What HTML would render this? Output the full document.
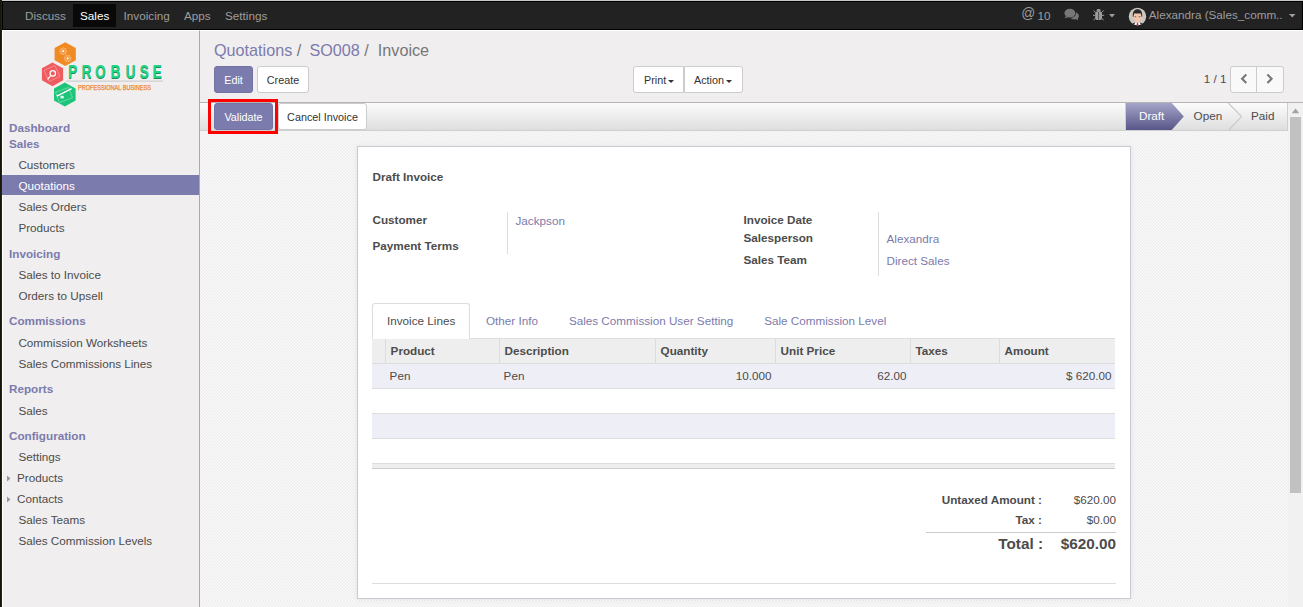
<!DOCTYPE html>
<html><head><meta charset="utf-8">
<style>
*{box-sizing:border-box}
html,body{margin:0;padding:0}
body{width:1303px;height:607px;overflow:hidden;position:relative;background:#f4f4f4;font-family:"Liberation Sans",sans-serif;font-size:11.7px;color:#4c4c4c}
.a{position:absolute}
.t{position:absolute;white-space:nowrap;font-size:11.7px;line-height:14px}
.b{font-weight:bold}
.p{color:#7c7bad}
#fl0{left:0;top:0;width:1px;height:607px;background:#16160a}
#fl1{left:1px;top:0;width:1px;height:607px;background:#222}
#ft0{left:2px;top:0;width:1301px;height:1px;background:#c8c8c8}
#nav{left:2px;top:1px;width:1301px;height:29px;background:#222;border:1px solid #000}
.nv{color:#9d9d9d}
#side{left:2px;top:30px;width:198px;height:577px;background:#f0eeee;border-left:1px solid #fff;border-top:1px solid #fff;border-right:1px solid #a9a9b2}
#cp{left:200px;top:30px;width:1103px;height:73px;background:#f0eeee;border-top:1px solid #fff;border-bottom:1px solid #b5b5b5}
#content{left:200px;top:103px;width:1103px;height:504px}
.btn{position:absolute;border:1px solid #ccc;border-radius:3px;background:#fff;color:#333;text-align:center;white-space:nowrap;font-size:10.8px}
.caret{display:inline-block;width:0;height:0;border-top:3.5px solid #333;border-left:3px solid transparent;border-right:3px solid transparent;vertical-align:middle;margin-left:-1px}
.bp{background:#7c7bad;border-color:#7372a6;color:#fff}
</style></head><body>
<div class="a" id="fl0"></div><div class="a" id="fl1"></div><div class="a" id="ft0"></div>
<div class="a" id="nav">
  <div class="a" style="left:70px;top:2px;width:43px;height:23px;background:#090909"></div>
</div>
<div class="t nv" style="left:25px;top:9px">Discuss</div>
<div class="t" style="left:80px;top:9px;color:#fff">Sales</div>
<div class="t nv" style="left:123.6px;top:9px">Invoicing</div>
<div class="t nv" style="left:184px;top:9px">Apps</div>
<div class="t nv" style="left:225px;top:9px">Settings</div>

<div class="t nv" style="left:1021.3px;top:4px;font-size:13.8px;line-height:19px">@</div>
<div class="t nv" style="left:1037.4px;top:9px">10</div>
<div class="t nv" style="left:1148.8px;top:8px">Alexandra (Sales_comm..</div>

<div class="a" id="side"></div>
<div class="a" id="cp"></div>
<svg class="a" id="content" width="1103" height="504" shape-rendering="crispEdges"><defs><pattern id="bgp" x="0" y="0" width="3" height="3" patternUnits="userSpaceOnUse"><rect width="3" height="3" fill="#f6f6f6"/><rect x="1" y="2" width="1" height="1" fill="#fdfdfd"/><rect x="0" y="2" width="1" height="1" fill="#efefef"/><rect x="2" y="2" width="1" height="1" fill="#efefef"/><rect x="1" y="0" width="1" height="2" fill="#efefef"/></pattern></defs><rect width="1103" height="504" fill="url(#bgp)"/></svg>

<!-- breadcrumb -->
<div class="t p" style="left:214px;top:41px;font-size:16.2px;line-height:19px">Quotations <span style="color:#777">/</span>&nbsp; <span style="margin-left:-0.9px">SO008</span> <span style="color:#777">/</span>&nbsp; <span style="color:#777">Invoice</span></div>

<div class="btn bp" style="left:214px;top:66px;width:39px;height:27px;line-height:27px">Edit</div>
<div class="btn" style="left:257px;top:66px;width:52px;height:27px;line-height:27px">Create</div>

<!-- sidebar -->
<div class="t b p" style="left:9px;top:121px">Dashboard</div>
<div class="t b p" style="left:9px;top:137px">Sales</div>
<div class="t" style="left:18.4px;top:158px">Customers</div>
<div class="a" style="left:2px;top:175px;width:197px;height:20px;background:#7c7bad"></div>
<div class="t" style="left:18.4px;top:179px;color:#fff">Quotations</div>
<div class="t" style="left:18.4px;top:200px">Sales Orders</div>
<div class="t" style="left:18.4px;top:221px">Products</div>
<div class="t b p" style="left:9px;top:247px">Invoicing</div>
<div class="t" style="left:18.4px;top:268px">Sales to Invoice</div>
<div class="t" style="left:18.4px;top:289px">Orders to Upsell</div>
<div class="t b p" style="left:9px;top:314px">Commissions</div>
<div class="t" style="left:18.4px;top:336px">Commission Worksheets</div>
<div class="t" style="left:18.4px;top:357px">Sales Commissions Lines</div>
<div class="t b p" style="left:9px;top:382px">Reports</div>
<div class="t" style="left:18.4px;top:404px">Sales</div>
<div class="t b p" style="left:9px;top:429px">Configuration</div>
<div class="t" style="left:18.4px;top:450px">Settings</div>
<div class="t" style="left:17px;top:471px">Products</div>
<div class="t" style="left:17px;top:492px">Contacts</div>
<div class="t" style="left:18.4px;top:513px">Sales Teams</div>
<div class="t" style="left:18.4px;top:534px">Sales Commission Levels</div>


<!-- control panel right -->
<div class="btn" style="left:633px;top:66px;width:51px;height:27px;line-height:26px;border-radius:3px 0 0 3px;text-align:left;padding-left:10px">Print <span class="caret"></span></div>
<div class="btn" style="left:684px;top:66px;width:59px;height:27px;line-height:26px;border-radius:0 3px 3px 0;text-align:left;padding-left:9px">Action <span class="caret"></span></div>
<div class="t" style="left:1203.7px;top:72px;color:#4c4c4c">1 / 1</div>
<div class="btn" style="left:1230px;top:66px;width:27px;height:27px;border-radius:3px 0 0 3px;background:#f9f9f9"></div>
<div class="btn" style="left:1256px;top:66px;width:27.5px;height:27px;border-radius:0 3px 3px 0;background:#f9f9f9"></div>

<!-- statusbar -->
<div class="a" id="sbar" style="left:200px;top:103px;width:1088px;height:28px;background:linear-gradient(#fcfcfc,#dedede);border-bottom:1px solid #cfcfcf;border-right:1px solid #cfcfcf"></div>
<div class="a" style="left:208px;top:99px;width:70px;height:35px;border:3px solid #f00"></div>
<div class="btn bp" style="left:214px;top:103px;width:59px;height:27px;line-height:26px">Validate</div>
<div class="btn" style="left:278px;top:103px;width:89px;height:27px;line-height:26px">Cancel Invoice</div>

<!-- scrollbar -->
<div class="a" style="left:1288px;top:103px;width:15px;height:504px;background:#f1f1f1"></div>
<div class="a" style="left:1290px;top:117px;width:11px;height:376px;background:#c1c1c1"></div>

<!-- sheet -->
<div class="a" id="sheet" style="left:357px;top:146px;width:774px;height:453px;background:#fff;border:1px solid #c9c9d4;box-shadow:0 0 6px rgba(0,0,0,.07)"></div>
<div class="t b" style="left:372.5px;top:170px">Draft Invoice</div>
<div class="t b" style="left:372.5px;top:213px">Customer</div>
<div class="t b" style="left:372.5px;top:239px">Payment Terms</div>
<div class="a" style="left:507px;top:212px;width:1px;height:42px;background:#ddd"></div>
<div class="t p" style="left:515.5px;top:214px">Jackpson</div>
<div class="t b" style="left:743.5px;top:213px">Invoice Date</div>
<div class="t b" style="left:743.5px;top:231px">Salesperson</div>
<div class="t b" style="left:743.5px;top:253px">Sales Team</div>
<div class="a" style="left:878px;top:212px;width:1px;height:64px;background:#ddd"></div>
<div class="t p" style="left:886.5px;top:232px">Alexandra</div>
<div class="t p" style="left:886.5px;top:254px">Direct Sales</div>

<!-- tabs -->
<div class="a" style="left:372px;top:338px;width:743px;height:1px;background:#ddd"></div>
<div class="a" style="left:372px;top:303px;width:98px;height:36px;background:#fff;border:1px solid #ddd;border-bottom:none;border-radius:3px 3px 0 0"></div>
<div class="t" style="left:387px;top:314px">Invoice Lines</div>
<div class="t p" style="left:486px;top:314px">Other Info</div>
<div class="t p" style="left:568.9px;top:314px">Sales Commission User Setting</div>
<div class="t p" style="left:764.2px;top:314px">Sale Commission Level</div>

<!-- table -->
<div class="a" style="left:372px;top:339px;width:743px;height:25px;background:#eee;border-bottom:1px solid #ddd"></div>
<div class="a" style="left:385px;top:339px;width:1px;height:24px;background:#ddd"></div>
<div class="a" style="left:499px;top:339px;width:1px;height:24px;background:#ddd"></div>
<div class="a" style="left:655px;top:339px;width:1px;height:24px;background:#ddd"></div>
<div class="a" style="left:775px;top:339px;width:1px;height:24px;background:#ddd"></div>
<div class="a" style="left:910px;top:339px;width:1px;height:24px;background:#ddd"></div>
<div class="a" style="left:999px;top:339px;width:1px;height:24px;background:#ddd"></div>
<div class="t b" style="left:390.6px;top:344px">Product</div>
<div class="t b" style="left:504.6px;top:344px">Description</div>
<div class="t b" style="left:660.6px;top:344px">Quantity</div>
<div class="t b" style="left:780.6px;top:344px">Unit Price</div>
<div class="t b" style="left:915.6px;top:344px">Taxes</div>
<div class="t b" style="left:1004.6px;top:344px">Amount</div>

<div class="a" style="left:372px;top:364px;width:743px;height:25px;background:#eeeef6;border-bottom:1px solid #ddd"></div>
<div class="t" style="left:389.6px;top:369px">Pen</div>
<div class="t" style="left:503.6px;top:369px">Pen</div>
<div class="t" style="left:600px;top:369px;width:171.4px;text-align:right">10.000</div>
<div class="t" style="left:740px;top:369px;width:166.4px;text-align:right">62.00</div>
<div class="t" style="left:940px;top:369px;width:171.4px;text-align:right">$ 620.00</div>

<div class="a" style="left:372px;top:389px;width:743px;height:25px;background:#fff;border-bottom:1px solid #ddd"></div>
<div class="a" style="left:372px;top:414px;width:743px;height:25px;background:#eeeef6;border-bottom:1px solid #ddd"></div>
<div class="a" style="left:372px;top:439px;width:743px;height:24px;background:#fff"></div>
<div class="a" style="left:372px;top:463px;width:743px;height:6px;background:#eee;border-top:1px solid #ddd;border-bottom:1px solid #ccc"></div>

<!-- totals -->
<div class="t b" style="left:900px;top:493px;width:142px;text-align:right">Untaxed Amount :</div>
<div class="t" style="left:1000px;top:493px;width:116px;text-align:right">$620.00</div>
<div class="t b" style="left:900px;top:513px;width:142px;text-align:right">Tax :</div>
<div class="t" style="left:1000px;top:513px;width:116px;text-align:right">$0.00</div>
<div class="a" style="left:926px;top:532px;width:190px;height:1px;background:#ccc"></div>
<div class="t b" style="left:900px;top:535px;width:143px;text-align:right;font-size:15.3px;line-height:18px">Total :</div>
<div class="t b" style="left:1000px;top:535px;width:116px;text-align:right;font-size:15.3px;line-height:18px">$620.00</div>
<div class="a" style="left:372px;top:583px;width:744px;height:1px;background:#ddd"></div>


<!-- navbar icons -->
<svg class="a" style="left:1060px;top:4px" width="60" height="22" viewBox="0 0 60 22">
  <g fill="#777">
    <ellipse cx="14.3" cy="11.9" rx="4.6" ry="3.7"/>
    <path d="M15.5 14.5l2.6 1.9-.4-2.6z"/>
  </g>
  <ellipse cx="9.9" cy="9.2" rx="6.1" ry="4.9" fill="#222"/>
  <g fill="#777">
    <ellipse cx="9.9" cy="9.1" rx="5.5" ry="4.3"/>
    <path d="M6 12l-1.5 2.3 3.6-1.1z"/>
  </g>
  <g fill="#9d9d9d">
    <ellipse cx="38.6" cy="6.3" rx="2.1" ry="1.4"/>
    <rect x="35.2" y="7.2" width="6.8" height="8.9" rx="2.6"/>
    <path d="M33.6 6.6l2.2 2M43.6 6.6l-2.2 2M33 11.3h2.4M44.2 11.3h-2.4M33.6 16l2.2-1.8M43.6 16l-2.2-1.8" stroke="#9d9d9d" stroke-width="1"/>
    <path d="M49 10h6l-3 3.5z"/>
  </g>
  <rect x="38.1" y="8" width="1" height="7.6" fill="#4a4a4a"/>
</svg>
<svg class="a" style="left:1128px;top:7px" width="19" height="19" viewBox="0 0 19 19">
  <defs><clipPath id="cc"><circle cx="9.5" cy="9.5" r="8.7"/></clipPath></defs>
  <circle cx="9.5" cy="9.5" r="8.7" fill="#cbc6bf"/>
  <g clip-path="url(#cc)">
    <path d="M2.5 19.5c.6-3 3-4.3 7-4.3s6.4 1.3 7 4.3z" fill="#3a3a3a"/>
    <path d="M6 19.5l1.2-4.2h4.6l1.2 4.2z" fill="#fff"/>
    <path d="M9 15.4h1l.5 3.2-1 .8-1-.8z" fill="#d8202c"/>
    <path d="M5.2 6.5C5.2 12.5 7.2 15.4 9.5 15.4S13.8 12.5 13.8 6.5z" fill="#f2c6ac"/>
    <path d="M4.8 9.8C4.4 4.6 6.4 2.3 9.5 2.3s5.1 2.3 4.7 7.5h-.7c-.2-2-.6-3.2-1.1-3.6-1.8.4-4 .4-5.8 0-.5.4-.9 1.6-1.1 3.6z" fill="#2b2b2b"/>
    <rect x="6.6" y="9.4" width="1.7" height=".8" fill="#5d4a40"/><rect x="10.7" y="9.4" width="1.7" height=".8" fill="#5d4a40"/>
  </g>
</svg>
<svg class="a" style="left:1286px;top:10px" width="12" height="10"><path d="M3 4h6.5l-3.25 3.5z" fill="#9d9d9d"/></svg>

<!-- pager chevrons -->
<svg class="a" style="left:1230px;top:66px" width="54" height="27" viewBox="0 0 54 27">
  <path d="M16.3 8.6L12.1 12.8 16.3 17" fill="none" stroke="#777" stroke-width="2.1"/>
  <path d="M37.4 8.6L41.6 12.8 37.4 17" fill="none" stroke="#777" stroke-width="2.1"/>
</svg>

<!-- statusbar right -->
<svg class="a" style="left:1125px;top:103px" width="163" height="28" viewBox="0 0 163 28">
  <defs><linearGradient id="pg" x1="0" y1="0" x2="0" y2="1"><stop offset="0" stop-color="#a5a4c9"/><stop offset="1" stop-color="#575688"/></linearGradient></defs>
  <rect x="0" y="0" width="1" height="27" fill="#cfcfcf"/>
  <path d="M1 0h45.7l12.1 13.5-12.1 13.5H1z" fill="url(#pg)"/>
  <path d="M103.3 0l13.2 13.6L103.8 27" fill="none" stroke="#cbcbcb" stroke-width="1.25"/>
</svg>
<div class="t" style="left:1139px;top:109px;color:#fff">Draft</div>
<div class="t" style="left:1193.6px;top:109px;color:#4c4c4c">Open</div>
<div class="t" style="left:1251px;top:109px;color:#4c4c4c">Paid</div>

<!-- scroll arrow -->
<svg class="a" style="left:1288px;top:103px" width="15" height="14"><path d="M3.8 10.2h7.4L7.5 5.6z" fill="#a3a3a3"/></svg>

<!-- sidebar carets -->
<svg class="a" style="left:6px;top:474px" width="6" height="30"><path d="M1 1.5l3.5 3-3.5 3z M1 22.5l3.5 3-3.5 3z" fill="#999"/></svg>

<!-- logo -->
<svg class="a" style="left:36px;top:38px" width="132" height="72" viewBox="36 38 132 72">
  <g>
    <path d="M65.2 42.2l10.6 5.9v12.1l-10.6 5.9-10.6-5.9V48.1z" fill="#f08a22"/>
    <path d="M52.5 62.4l10.6 5.9v12l-10.6 5.9-10.6-5.9v-12z" fill="#ef5b5f"/>
    <path d="M64.8 82.6l10.8 6v12l-10.8 6-10.8-6v-12z" fill="#1ec47a"/>
  </g>
  <g fill="none" stroke="#fcc690" stroke-width="1.1" stroke-dasharray="1 .8">
    <circle cx="63.2" cy="51.2" r="3.2"/><circle cx="67.7" cy="58.4" r="3.2"/>
  </g>
  <g fill="none" stroke="#f9b77a" stroke-width=".7"><circle cx="63.2" cy="51.2" r="2.3"/><circle cx="67.7" cy="58.4" r="2.3"/></g>
  <circle cx="63.2" cy="51.2" r="1.1" fill="#fff"/><circle cx="67.7" cy="58.4" r="1.1" fill="#fff"/>
  <rect x="46" y="67.5" width="12" height="12" transform="rotate(-25 52 73.5)" fill="none" stroke="#f7a3a5" stroke-width=".6"/>
  <g fill="none" stroke="#fff" stroke-width="1.2">
    <circle cx="52.8" cy="73.4" r="2.7"/>
    <path d="M50.9 75.4l-3.3 4"/>
  </g>
  <rect x="57" y="89.5" width="14" height="11" transform="rotate(-20 64 95)" fill="none" stroke="#8ee0b9" stroke-width=".6"/>
  <path d="M56.8 96.2l14.8-7.6" stroke="#fff" stroke-width="1.5"/>
  <rect x="60.5" y="95.8" width="3.2" height="2.6" fill="#fff" opacity=".9"/>
<g transform="translate(68.2 0) scale(.72 1)"><text x="0" y="79.2" font-family="Liberation Sans" font-weight="bold" font-size="18.6" fill="#1b8a58">P</text><text x="0" y="78.3" font-family="Liberation Sans" font-weight="bold" font-size="18.6" fill="#21d482">P</text></g>
<g transform="translate(81.8 0) scale(.72 1)"><text x="0" y="79.2" font-family="Liberation Sans" font-weight="bold" font-size="18.6" fill="#1b8a58">R</text><text x="0" y="78.3" font-family="Liberation Sans" font-weight="bold" font-size="18.6" fill="#21d482">R</text></g>
<g transform="translate(95.3 0) scale(.72 1)"><text x="0" y="79.2" font-family="Liberation Sans" font-weight="bold" font-size="18.6" fill="#1b8a58">O</text><text x="0" y="78.3" font-family="Liberation Sans" font-weight="bold" font-size="18.6" fill="#21d482">O</text></g>
<g transform="translate(110.8 0) scale(.72 1)"><text x="0" y="79.2" font-family="Liberation Sans" font-weight="bold" font-size="18.6" fill="#1b8a58">B</text><text x="0" y="78.3" font-family="Liberation Sans" font-weight="bold" font-size="18.6" fill="#21d482">B</text></g>
<g transform="translate(125.8 0) scale(.72 1)"><text x="0" y="79.2" font-family="Liberation Sans" font-weight="bold" font-size="18.6" fill="#1b8a58">U</text><text x="0" y="78.3" font-family="Liberation Sans" font-weight="bold" font-size="18.6" fill="#21d482">U</text></g>
<g transform="translate(139.8 0) scale(.72 1)"><text x="0" y="79.2" font-family="Liberation Sans" font-weight="bold" font-size="18.6" fill="#1b8a58">S</text><text x="0" y="78.3" font-family="Liberation Sans" font-weight="bold" font-size="18.6" fill="#21d482">S</text></g>
<g transform="translate(152.8 0) scale(.72 1)"><text x="0" y="79.2" font-family="Liberation Sans" font-weight="bold" font-size="18.6" fill="#1b8a58">E</text><text x="0" y="78.3" font-family="Liberation Sans" font-weight="bold" font-size="18.6" fill="#21d482">E</text></g>
<rect x="66" y="80.6" width="97" height="1" fill="#c9c7c7"/>
  <text x="78" y="90" font-family="Liberation Sans" font-size="7" fill="#ec8630" stroke="#ec8630" stroke-width=".25" textLength="73" lengthAdjust="spacingAndGlyphs">PROFESSIONAL BUSINESS</text>
</svg>

</body></html>
